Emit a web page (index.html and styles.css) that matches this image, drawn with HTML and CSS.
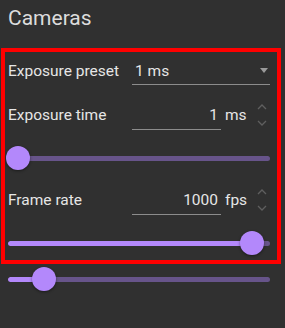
FILE: index.html
```html
<!DOCTYPE html>
<html>
<head>
<meta charset="utf-8">
<link rel="stylesheet" href="styles.css">
</head>
<body>
<div class="panel">
  <div class="title">Cameras</div>
  <div class="box">
    <div class="field field-select">
      <div class="label">Exposure preset</div>
      <div class="select">
        <span class="select-value">1 ms</span>
        <span class="caret"></span>
      </div>
    </div>
    <div class="field field-number">
      <div class="label">Exposure time</div>
      <div class="number">1</div>
      <div class="suffix">ms</div>
      <div class="spin">
        <svg width="10" height="6" viewBox="0 0 10 6"><path d="M1 5 L5 1 L9 5" fill="none" stroke="#5f5f5f" stroke-width="1.3"/></svg>
        <svg width="10" height="6" viewBox="0 0 10 6"><path d="M1 1 L5 5 L9 1" fill="none" stroke="#5f5f5f" stroke-width="1.3"/></svg>
      </div>
    </div>
    <div class="slider slider-1">
      <div class="track"><div class="fill" style="width:0px"></div></div>
      <div class="thumb" style="left:-2px"></div>
    </div>
    <div class="field field-number field-rate">
      <div class="label">Frame rate</div>
      <div class="number">1000</div>
      <div class="suffix">fps</div>
      <div class="spin">
        <svg width="10" height="6" viewBox="0 0 10 6"><path d="M1 5 L5 1 L9 5" fill="none" stroke="#5f5f5f" stroke-width="1.3"/></svg>
        <svg width="10" height="6" viewBox="0 0 10 6"><path d="M1 1 L5 5 L9 1" fill="none" stroke="#5f5f5f" stroke-width="1.3"/></svg>
      </div>
    </div>
    <div class="slider slider-2">
      <div class="track"><div class="fill" style="width:244px"></div></div>
      <div class="thumb" style="left:232px"></div>
    </div>
  </div>
  <div class="slider slider-3">
    <div class="track"><div class="fill" style="width:36px"></div></div>
    <div class="thumb" style="left:24px"></div>
  </div>
</div>
</body>
</html>
```

FILE: styles.css
```css
html, body {
  margin: 0;
  padding: 0;
  background: #303030;
}
body {
  width: 285px;
  height: 328px;
  overflow: hidden;
  font-family: Roboto, "Noto Sans", sans-serif;
  color: #e6e6e6;
}
.panel {
  height: 328px;
  box-sizing: border-box;
}
.title {
  height: 48px;
  box-sizing: border-box;
  padding: 4px 8px 0;
  font-size: 21px;
  line-height: 28px;
  font-weight: 400;
  color: #dcdcdc;
}
.box {
  margin-left: 1px;
  width: 280px;
  box-sizing: border-box;
  border: 4px solid #ff0000;
  padding: 0 7px 5px 3px;
}
.field {
  display: flex;
  align-items: flex-start;
  font-size: 15.5px;
  line-height: 20px;
}
.field-select { margin-top: 9px; }
.field-number { margin-top: 20px; }
.label {
  width: 124px;
  flex: none;
}
.select {
  width: 139px;
  box-sizing: border-box;
  display: flex;
  align-items: center;
  justify-content: space-between;
  padding: 0 2px 3px 3px;
  border-bottom: 1px solid #8c8c8c;
}
.caret {
  width: 0;
  height: 0;
  border-left: 4px solid transparent;
  border-right: 4px solid transparent;
  border-top: 5px solid #9a9a9a;
  margin-top: -2px;
}
.number {
  width: 89px;
  box-sizing: border-box;
  text-align: right;
  padding: 0 3px 4px 0;
  border-bottom: 1px solid #8c8c8c;
}
.suffix {
  width: 36px;
  box-sizing: border-box;
  padding-left: 4px;
}
.spin {
  width: 10px;
  display: flex;
  flex-direction: column;
  justify-content: space-between;
  height: 22px;
  margin-top: -1px;
}
.spin svg { display: block; }
.slider {
  position: relative;
  height: 24px;
  display: flex;
  align-items: center;
}
.slider-1, .slider-2 { margin-top: 16px; }
.slider-3 {
  margin: 3px 15px 0 8px;
}
.track {
  flex: 1;
  height: 5px;
  border-radius: 3px;
  background: #67548a;
  overflow: hidden;
}
.fill {
  height: 100%;
  background: #b388fb;
  border-radius: 3px;
}
.thumb {
  position: absolute;
  top: 0;
  width: 24px;
  height: 24px;
  border-radius: 50%;
  background: #b388fb;
  box-shadow: 0 1px 3px rgba(0, 0, 0, 0.45);
}
```
